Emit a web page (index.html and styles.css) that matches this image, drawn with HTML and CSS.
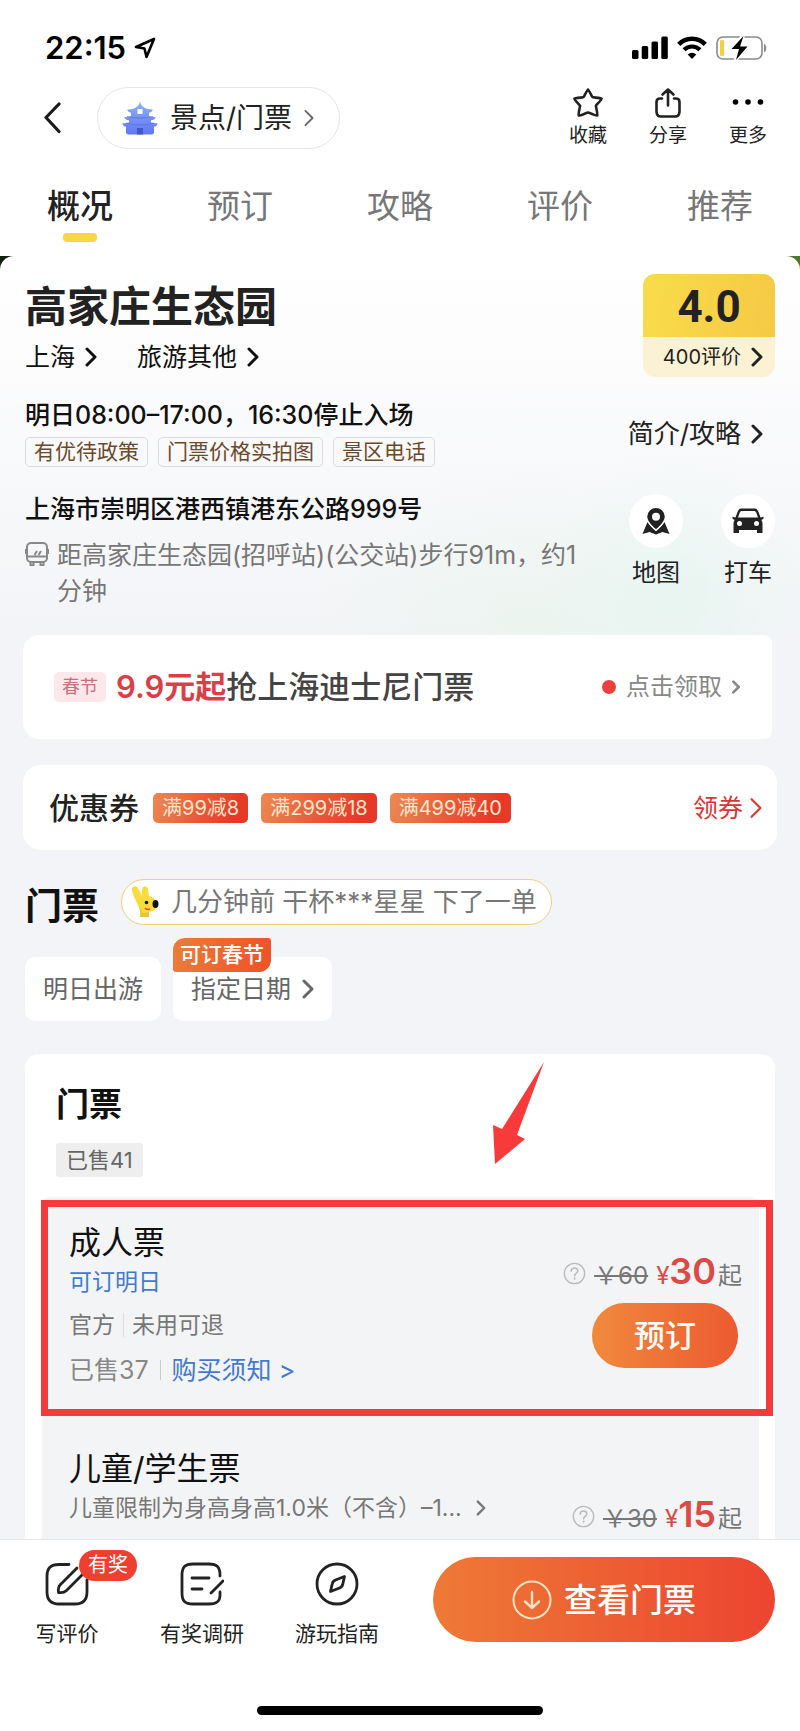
FILE: index.html
```html
<!DOCTYPE html>
<html lang="zh-CN">
<head>
<meta charset="utf-8">
<meta name="viewport" content="width=device-width, initial-scale=1">
<title>高家庄生态园</title>
<link rel="stylesheet" href="styles.css">
</head>
<body>
<svg class="defs" aria-hidden="true">
  <symbol id="chevron" viewBox="0 0 12 20"><path d="M2 2l8 8-8 8" fill="none" stroke="currentColor" stroke-linecap="round" stroke-linejoin="round"/></symbol>
  <symbol id="help" viewBox="0 0 24 24"><circle cx="12" cy="12" r="10.6" fill="none" stroke="currentColor" stroke-width="1.4"/><path d="M8.6 9.6c0-2 1.4-3.3 3.4-3.3s3.4 1.2 3.4 3c0 2.4-3.3 2.6-3.3 5.2" fill="none" stroke="currentColor" stroke-width="1.6" stroke-linecap="round"/><circle cx="12.1" cy="17.4" r="1.1" fill="currentColor"/></symbol>
</svg>
<div class="app">
  <header class="top">
    <div class="status">
      <div class="status-time">
        <span>22:15</span>
        <svg width="22" height="22" viewBox="0 0 22 22"><path d="M20 2L2 10l8.500 1.500L12.500 20z" fill="none" stroke="#000" stroke-width="2.600" stroke-linejoin="round"/></svg>
      </div>
      <div class="status-icons">
        <svg width="36" height="24" viewBox="0 0 36 24"><rect x="0" y="14" width="6.500" height="9" rx="1.500"/><rect x="9.700" y="10" width="6.500" height="13" rx="1.500"/><rect x="19.500" y="5.500" width="6.500" height="17.500" rx="1.500"/><rect x="29.300" y="0.500" width="6.500" height="22.500" rx="1.500"/></svg>
        <svg width="30" height="24" viewBox="0 0 30 24"><path d="M1.800 8.300a18.600 18.600 0 0 1 26.400 0" fill="none" stroke="#000" stroke-width="4.600"/><path d="M7 13.800a11.300 11.300 0 0 1 16 0" fill="none" stroke="#000" stroke-width="4.200"/><path d="M15 23l-4.300-4.400a6 6 0 0 1 8.600 0z"/></svg>
        <svg width="52" height="26" viewBox="0 0 52 26"><rect x="1" y="2" width="45" height="22" rx="6" fill="#fff" stroke="#8a8a8a" stroke-width="1.600"/><path d="M48 9c3 .5 3 8 0 8z" fill="#8a8a8a"/><rect x="4" y="5" width="4" height="16" rx="1" fill="#f4cf45"/><path d="M27.500 0L14.500 14.500h7.500L19 26 32 11h-7.500z" stroke="#fff" stroke-width="3"/><path d="M27.500 1L15.500 14h7.500L20 25 31.500 11.500h-7.500z"/></svg>
      </div>
    </div>
    <nav class="nav">
      <button class="back" aria-label="返回"><svg width="20" height="32" viewBox="0 0 20 32"><path d="M16 2L3 15.500 16 29.500" fill="none" stroke="#1b1b1b" stroke-width="3.200" stroke-linecap="round" stroke-linejoin="round"/></svg></button>
      <button class="crumb">
        <svg width="36" height="34" viewBox="0 0 36 34"><defs><linearGradient id="temple" x1="0" y1="0" x2="0" y2="1"><stop offset="0" stop-color="#8fb2fb"/><stop offset="1" stop-color="#6076f5"/></linearGradient></defs><path d="M18 0c.7 4 2.500 6.500 8 8 3 .8 5 0 4.500 1.500-.5 1.600-2.500 2-3.500 2.200V15c3 1 6.500 1.400 6.500.4.300 2-1.500 3.600-4.500 3.800v2.300c3 1 6.500 1 6.500.2.300 2.500-1.500 3.800-3.500 4V31c0 1.500-.8 2.500-2.500 2.500h-23C4.800 33.500 4 32.500 4 31v-5.300c-2-.2-3.800-1.500-3.500-4 0 .8 3.500.8 6.500-.2v-2.300c-3-.2-4.800-1.800-4.500-3.800 0 1 3.500.6 6.500-.4v-3.300c-1-.2-3-.6-3.500-2.200C5 8 7 8.800 10 8c5.500-1.500 7.300-4 8-8z" fill="url(#temple)"/><rect x="15.500" y="8" width="5" height="5" fill="#fff"/><path d="M4 22c8 2.500 20 2.500 28 0M5 15.500c8 2 18 2 26 0" stroke="#5266c9" stroke-width="1" fill="none" opacity=".6"/><path d="M15 33.500V27h6v6.500z" fill="#4158c9"/></svg>
        <span>景点/门票</span>
        <svg class="chev chev-crumb"><use href="#chevron"/></svg>
      </button>
      <div class="actions">
        <button class="action"><svg width="32" height="32" viewBox="0 0 32 32"><path d="M16 2.500c.8 0 4 7.400 4.500 7.700s8.800.8 9.200 1.500-5.700 6.500-5.800 7 2 9.200 1.400 9.900S17 25.500 16 25.500s-8.500 3.800-9.300 3.100 1.500-9.300 1.400-9.900-6.200-6.200-5.800-7 8.700-1.200 9.200-1.500S15.200 2.500 16 2.500z" fill="none" stroke="#222" stroke-width="2.600" stroke-linejoin="round"/></svg><span>收藏</span></button>
        <button class="action"><svg width="32" height="32" viewBox="0 0 32 32"><path d="M10 11.500H8c-2 0-3.500 1-3.500 3.500v9.500c0 3 1.500 5 4.500 5h14c3 0 4.500-2 4.500-5V15c0-2.500-1.500-3.500-3.500-3.500h-2M16 18.500V3M10.500 7.500L16 2.500l5.500 5" fill="none" stroke="#222" stroke-width="2.600" stroke-linecap="round" stroke-linejoin="round"/></svg><span>分享</span></button>
        <button class="action"><svg width="32" height="32" viewBox="0 0 32 32"><circle cx="3.500" cy="15" r="2.800"/><circle cx="16" cy="15" r="2.800"/><circle cx="28.500" cy="15" r="2.800"/></svg><span>更多</span></button>
      </div>
    </nav>
    <div class="tabs">
      <a class="tab tab-on" href="#overview">概况</a>
      <a class="tab" href="#book">预订</a>
      <a class="tab" href="#guide">攻略</a>
      <a class="tab" href="#reviews">评价</a>
      <a class="tab" href="#more">推荐</a>
    </div>
  </header>

  <main class="main">
    <section class="hero" id="overview">
      <div class="sheet">
        <div class="row row-title">
          <div class="title-block">
            <h1>高家庄生态园</h1>
            <div class="links">
              <a href="#city">上海 <svg class="chev"><use href="#chevron"/></svg></a>
              <a href="#kind">旅游其他 <svg class="chev"><use href="#chevron"/></svg></a>
            </div>
          </div>
          <a class="rating" href="#reviews">
            <strong>4.0</strong>
            <span class="rating-count">400评价 <svg class="chev"><use href="#chevron"/></svg></span>
          </a>
        </div>
        <div class="row row-hours">
          <div>
            <p class="strong">明日08:00–17:00，16:30停止入场</p>
            <div class="tags"><span class="tag">有优待政策</span><span class="tag">门票价格实拍图</span><span class="tag">景区电话</span></div>
          </div>
          <a class="intro" href="#guide">简介/攻略 <svg class="chev"><use href="#chevron"/></svg></a>
        </div>
        <div class="row row-place">
          <div class="place">
            <p class="strong address">上海市崇明区港西镇港东公路999号</p>
            <p class="transit">
              <svg width="24" height="26" viewBox="0 0 24 26"><rect x="2" y="2" width="20" height="19" rx="4" fill="none" stroke="#888" stroke-width="2"/><path d="M2 15.500h20M9.500 14l2.500-4M13.500 14l2.500-4M1 8v5M23 8v5M5.500 21v3h3v-3M15.500 21v3h3v-3" fill="none" stroke="#888" stroke-width="2"/></svg>
              <span>距高家庄生态园(招呼站)(公交站)步行91m，约1分钟</span>
            </p>
          </div>
          <div class="rounds">
            <a class="round" href="#map"><i><svg width="30" height="30" viewBox="0 0 30 30"><path d="M6.500 16L1.500 28l7-2 6.500 2.500 6.500-2.500 7 2-5-12-8.500 9z" fill="#222"/><path d="M15 1.200a9.500 9.500 0 0 1 9.500 9.500c0 6-9.500 13.500-9.500 13.500S5.500 16.700 5.500 10.700A9.500 9.500 0 0 1 15 1.200z" fill="#222" stroke="#fff" stroke-width="1.500"/><circle cx="15" cy="10.700" r="4" fill="#fff"/></svg></i>地图</a>
            <a class="round" href="#taxi"><i><svg width="32" height="28" viewBox="0 0 32 28"><path d="M10 1.500h12c2.500 0 3.500 1 4.500 3.500l2 5.500 3-.8v2l-2.200 1.300c.8 1 1.200 2.500 1.200 4V26H25v-3H7v3H1.500v-9c0-1.500.4-3 1.200-4L.5 11.700v-2l3 .8 2-5.500C6.500 2.500 7.500 1.500 10 1.500z" fill="#222"/><path d="M10 4h12c1.200 0 1.800.5 2.300 1.800l1.700 4.700H6l1.700-4.700C8.200 4.500 8.800 4 10 4z" fill="#fff"/><circle cx="7.500" cy="16.500" r="2.500" fill="#fff"/><circle cx="24.500" cy="16.500" r="2.500" fill="#fff"/></svg></i>打车</a>
          </div>
        </div>
      </div>
    </section>

    <a class="card promo" href="#promo">
      <span class="promo-chip">春节</span>
      <span class="promo-text"><b>9.9元起</b>抢上海迪士尼门票</span>
      <span class="promo-cta">点击领取 <svg class="chev chev-small"><use href="#chevron"/></svg></span>
    </a>

    <section class="card coupons">
      <h2>优惠券</h2>
      <div class="coupon-list"><span>满99减8</span><span>满299减18</span><span>满499减40</span></div>
      <a href="#coupons">领券 <svg class="chev chev-large"><use href="#chevron"/></svg></a>
    </section>

    <section class="booking" id="book">
      <div class="booking-head">
        <h2>门票</h2>
        <div class="ticker">
          <svg width="28" height="34" viewBox="0 0 28 34"><path d="M1 4c0-3 4-4 6-1l4 8c0-4-1-9 2-9.500 3-.5 4 1 4 3.500l1 6c5 1 8 5 8 9 0 4-3 6-8 7v5H9c1-5 0-8-2-12C4 14 1 8 1 4z" fill="#f7dc3c"/><path d="M9 32c1-5 0-8-2-12l5 8 6-1v5z" fill="#e3b62c" opacity=".6"/><ellipse cx="24.500" cy="19" rx="3" ry="4" fill="#111"/><circle cx="15.500" cy="17.500" r="1.800" fill="#111"/><path d="M14 23c1.500 1.500 3 1.800 5 1" fill="none" stroke="#d6503c" stroke-width="1.500"/></svg>
          <span>几分钟前 干杯***星星 下了一单</span>
        </div>
      </div>
      <div class="dates">
        <button class="date">明日出游</button>
        <button class="date">指定日期 <svg class="chev"><use href="#chevron"/></svg><span class="date-badge">可订春节</span></button>
      </div>

      <div class="tickets">
        <svg class="pointer" width="52" height="103" viewBox="0 0 52 103"><path d="M51 0L9 67 0 63l2 39 30-25-8-4z" fill="#f93a3a"/></svg>
        <h3>门票</h3>
        <span class="sold">已售41</span>
        <div class="list">
          <article class="ticket">
            <div class="ticket-info">
              <h4>成人票</h4>
              <p class="when">可订明日</p>
              <p class="terms"><span>官方</span><span>未用可退</span></p>
              <p class="notes"><span>已售37</span><a href="#notes">购买须知 &gt;</a></p>
            </div>
            <div class="buy">
              <p class="price"><svg class="help"><use href="#help"/></svg><s>￥60</s><b><small>¥</small>30</b><span>起</span></p>
              <button class="book">预订</button>
            </div>
            <span class="frame"></span>
          </article>
          <article class="ticket ticket-next">
            <div class="ticket-info">
              <h4>儿童/学生票</h4>
              <p class="limit">儿童限制为身高身高1.0米（不含）–1... <svg class="chev chev-limit"><use href="#chevron"/></svg></p>
            </div>
            <div class="buy">
              <p class="price"><svg class="help"><use href="#help"/></svg><s>￥30</s><b><small>¥</small>15</b><span>起</span></p>
            </div>
          </article>
        </div>
      </div>
    </section>
  </main>

  <footer class="bar">
    <div class="bar-row">
      <div class="bar-tools">
        <button class="tool"><svg width="44" height="44" viewBox="0 0 44 44"><path d="M24 2.500H14C6 2.500 2 6 2 14v16c0 8 4 12 12 12h16c8 0 12-4 12-12V18M32 6L15.500 22.500c-2.500 2.500-2.500 5-2 8 3 .5 5.500.5 8-2L38 12" fill="none" stroke="#222" stroke-width="2.800" stroke-linecap="round" stroke-linejoin="round"/></svg><span>写评价</span><span class="tool-badge">有奖</span></button>
        <button class="tool"><svg width="44" height="44" viewBox="0 0 44 44"><path d="M40 14v-1c0-8-3-11-11-11H13C5 2 2 5 2 13v18c0 8 3 11 11 11h16c7 0 11-2 11-9v-3M12 16h17M12 27h10M43 19L31 31" fill="none" stroke="#222" stroke-width="2.800" stroke-linecap="round" stroke-linejoin="round"/></svg><span>有奖调研</span></button>
        <button class="tool"><svg width="44" height="44" viewBox="0 0 44 44"><circle cx="22" cy="22" r="20" fill="none" stroke="#222" stroke-width="2.800"/><path d="M29.500 14.500l-9 3.500c-2 .8-3 2-3.300 4l-1.700 7.500 9-3.500c2-.8 3-2 3.300-4z" fill="none" stroke="#222" stroke-width="2.800" stroke-linejoin="round"/></svg><span>游玩指南</span></button>
      </div>
      <button class="view"><svg width="40" height="40" viewBox="0 0 40 40"><circle cx="20" cy="20" r="18.500" fill="none" stroke="#ffe2c4" stroke-width="2"/><path d="M20 12v16M13 21.500l7 6.500 7-6.500" fill="none" stroke="#ffe2c4" stroke-width="2.400" stroke-linecap="round" stroke-linejoin="round"/></svg>查看门票</button>
    </div>
    <div class="home"></div>
  </footer>
</div>
</body>
</html>
```

FILE: styles.css
```css
* { box-sizing: border-box; }

body {
  margin: 0;
  background: #f3f4f7;
  color: #222;
  font-family: Inter, "Noto Sans CJK SC", sans-serif;
  font-size: 25px;
  line-height: 30px;
}

h1, h2, h3, h4 { margin: 0; font-weight: 500; }
p { margin: 0; }
a { color: inherit; text-decoration: none; }
button { border: 0; padding: 0; background: none; color: inherit; font: inherit; }
svg { flex: none; display: block; }
.defs { position: absolute; width: 0; height: 0; }

.chev { display: inline-block; width: 12px; height: 20px; stroke-width: 3; }
.chev-crumb { height: 18px; stroke-width: 2; color: #666; }
.chev-small { width: 8px; height: 14px; stroke-width: 4; }
.chev-large { width: 14px; height: 22px; stroke-width: 2; }
.chev-limit { width: 10px; height: 16px; }

.app { display: flex; flex-direction: column; min-height: 100vh; }

/* header */
.top { background: #fff; }
.status { display: flex; justify-content: space-between; align-items: center; padding: 32px 32px 0 45px; line-height: 32px; }
.status-time { display: flex; align-items: center; gap: 8px; font-size: 31px; font-weight: 600; color: #000; }
.status-icons { display: flex; align-items: center; gap: 9px; }

.nav { display: flex; align-items: center; padding: 23px 32px 0 43px; }
.back { width: 20px; margin-right: 34px; }
.crumb { display: flex; align-items: center; height: 62px; padding: 0 24px; border: 1px solid #e6e6e8; border-radius: 31px; font-size: 28px; }
.crumb span { margin: 0 11px 0 12px; }
.actions { display: flex; gap: 40px; margin-left: auto; }
.action { display: flex; flex-direction: column; align-items: center; width: 40px; font-size: 19px; line-height: 26px; gap: 4px; }

.tabs { display: grid; grid-template-columns: repeat(5, 1fr); margin-top: 37px; padding-bottom: 14px; }
.tab { display: flex; flex-direction: column; align-items: center; gap: 7px; color: #777; font-size: 33px; line-height: 40px; }
.tab::after { content: ""; width: 34px; height: 9px; border-radius: 4px; }
.tab-on { color: #222; font-weight: 500; }
.tab-on::after { background: #f8d648; }

/* overview */
.main { display: flex; flex-direction: column; flex: 1; }
.hero { background: linear-gradient(90deg, #10200c 50%, #4c7a28 50%); }
.sheet {
  padding: 18px 25px 26px;
  border-radius: 14px 14px 0 0;
  background:
    radial-gradient(circle at 85% 88%, rgba(222, 246, 236, .5), transparent 140px),
    radial-gradient(ellipse at 66% 95%, rgba(228, 244, 232, .5), transparent 220px),
    linear-gradient(#fff, #f3f4f7);
}
.row { display: flex; justify-content: space-between; }
.title-block { padding-top: 8px; }
h1 { font-size: 42px; font-weight: 600; line-height: 50px; }
.links { display: flex; gap: 40px; margin-top: 10px; color: #111; }
.links a, .intro, .rating-count, .coupons a, .promo-cta, .limit { display: flex; align-items: center; gap: 10px; }

.rating { width: 132px; overflow: hidden; border-radius: 12px; background: #fbf2d4; text-align: center; }
.rating strong { display: block; background: linear-gradient(100deg, #f9dc4a, #f5c944); font: bold 44px/66px Roboto, sans-serif; height: 63px; }
.rating-count { justify-content: flex-end; padding-right: 12px; font-size: 20px; line-height: 40px; }

.row-hours { align-items: center; margin-top: 23px; }
.strong { font-weight: 500; color: #111; }
.tags { display: flex; gap: 10px; margin-top: 7px; }
.tag { padding: 0 8px; border: 1px solid #dcdcde; border-radius: 5px; color: #6b4a2c; font-size: 21px; line-height: 28px; }
.intro { padding-right: 12px; font-size: 26px; }

.row-place { gap: 36px; margin-top: 27px; }
.place { flex: 1; }
.transit { display: flex; gap: 8px; margin-top: 13px; color: #777; line-height: 36px; }
.transit svg { margin-top: 4px; }
.rounds { display: flex; gap: 38px; }
.round { display: flex; flex-direction: column; align-items: center; gap: 10px; width: 54px; font-size: 24px; }
.round i { display: grid; place-items: center; width: 54px; height: 54px; border-radius: 50%; background: #fff; }

/* promo and coupons */
.card { display: flex; align-items: center; background: #fff; }
.promo { min-height: 104px; margin: 0 28px 0 23px; padding: 0 32px 0 31px; border-radius: 16px 8px 8px 16px; }
.promo-chip { padding: 0 8px; border-radius: 5px; background: #fce8ea; color: #c8707c; font-size: 18px; }
.promo-text { margin-left: 10px; color: #444; font-size: 31px; font-weight: 500; }
.promo-text b { color: #dc3e48; font-weight: 600; }
.promo-cta { margin-left: auto; color: #888; font-size: 24px; }
.promo-cta::before { content: ""; width: 14px; height: 14px; border-radius: 50%; background: #ee3f40; }

.coupons { min-height: 85px; margin: 26px 23px 0; padding: 0 14px 0 26px; border-radius: 18px; }
.coupons h2 { font-size: 30px; }
.coupon-list { display: flex; gap: 13px; margin-left: 14px; }
.coupon-list span { padding: 0 9px; border-radius: 5px; background: linear-gradient(110deg, #ec8a52, #e73828 85%); color: #ffe6cc; font-size: 20px; }
.coupons a { margin-left: auto; gap: 6px; color: #dc3533; }

/* booking */
.booking { display: flex; flex-direction: column; flex: 1; padding: 29px 25px 0; }
.booking-head { display: flex; align-items: flex-start; gap: 22px; }
.booking-head h2 { font-size: 37px; font-weight: 600; line-height: 56px; color: #111; }
.ticker { display: flex; align-items: center; gap: 12px; height: 46px; padding: 0 14px 0 9px; border: 1px solid #ead27a; border-radius: 23px; background: #fff; color: #777; font-size: 26px; }
.dates { display: flex; gap: 12px; margin-top: 22px; }
.date { position: relative; display: flex; align-items: center; gap: 11px; height: 64px; padding: 0 18px; border-radius: 10px; background: #fff; color: #666; }
.date-badge { position: absolute; top: -19px; left: 0; padding: 0 7px; border-radius: 12px 3px; background: linear-gradient(100deg, #ec7c38, #ee5228); color: #fff; font-size: 21px; font-weight: 500; line-height: 34px; white-space: nowrap; }

.tickets { position: relative; display: flex; flex-direction: column; flex: 1; margin-top: 33px; padding: 30px 16px 0 17px; border-radius: 14px 14px 0 0; background: #fff; }
.tickets h3 { margin-left: 14px; color: #111; font-size: 33px; font-weight: 600; line-height: 40px; }
.sold { align-self: flex-start; margin: 19px 0 20px 14px; padding: 0 10px; border-radius: 3px; background: #eee; color: #666; font-size: 22px; line-height: 34px; }
.pointer { position: absolute; top: 8px; right: 230px; }
.list { flex: 1; border-radius: 8px 8px 0 0; background: #f3f4f6; }
.ticket { position: relative; display: flex; justify-content: space-between; padding: 26px 17px 38px 27px; }
.ticket-next { padding-bottom: 0; }
h4 { color: #111; font-size: 32px; font-weight: 400; line-height: 40px; }
.when, .terms, .limit { font-size: 23px; }
.when { margin-top: 4px; color: #4379d0; }
.terms, .notes { display: flex; align-items: center; color: #777; }
.terms { margin-top: 13px; }
.notes { margin-top: 15px; }
.terms span + span { margin-left: 8px; padding-left: 8px; border-left: 1px solid #ddd; line-height: 24px; }
.notes span { color: #888; }
.notes a { margin-left: 11px; padding-left: 11px; border-left: 1px solid #ccc; color: #4379d0; line-height: 20px; }
.limit { gap: 14px; margin-top: 4px; color: #777; }

.buy { display: flex; flex-direction: column; align-items: flex-end; gap: 9px; padding-top: 30px; }
.ticket-next .buy { padding-top: 47px; }
.price { display: flex; align-items: baseline; color: #777; font-size: 24px; line-height: 36px; }
.help { align-self: center; width: 23px; height: 23px; margin-right: 8px; color: #bbb; }
.price b { margin: 0 2px 0 8px; color: #dd4a45; font-size: 36px; font-weight: 600; }
.price small { font-size: 24px; font-weight: 400; }
.book { width: 146px; height: 65px; margin-right: 4px; border-radius: 33px; background: linear-gradient(90deg, #f08a3c, #ec5a30); color: #fff; font-size: 31px; font-weight: 500; }
.frame { position: absolute; top: 3px; right: -14px; bottom: 7px; left: -1px; border: 7px solid #f53a3b; }

/* bottom bar */
.bar { padding: 17px 25px 16px; border-top: 1px solid #e4e6ea; background: #fff; }
.bar-row { display: flex; justify-content: space-between; align-items: flex-start; }
.bar-tools { display: grid; grid-template-columns: repeat(3, 84px); gap: 51px; padding-top: 5px; }
.tool { position: relative; display: flex; flex-direction: column; align-items: center; gap: 13px; font-size: 21px; }
.tool-badge { position: absolute; top: -12px; left: 54px; padding: 0 9px; border-radius: 16px; background: #ee4030; color: #fff; font-size: 20px; line-height: 31px; white-space: nowrap; }
.view { display: flex; justify-content: center; align-items: center; gap: 12px; width: 342px; height: 85px; border-radius: 43px; background: linear-gradient(90deg, #ee7a36, #ec4430); color: #fff; font-size: 33px; font-weight: 500; }
.home { width: 286px; height: 9px; margin: 57px auto 0; border-radius: 5px; background: #000; }
```
